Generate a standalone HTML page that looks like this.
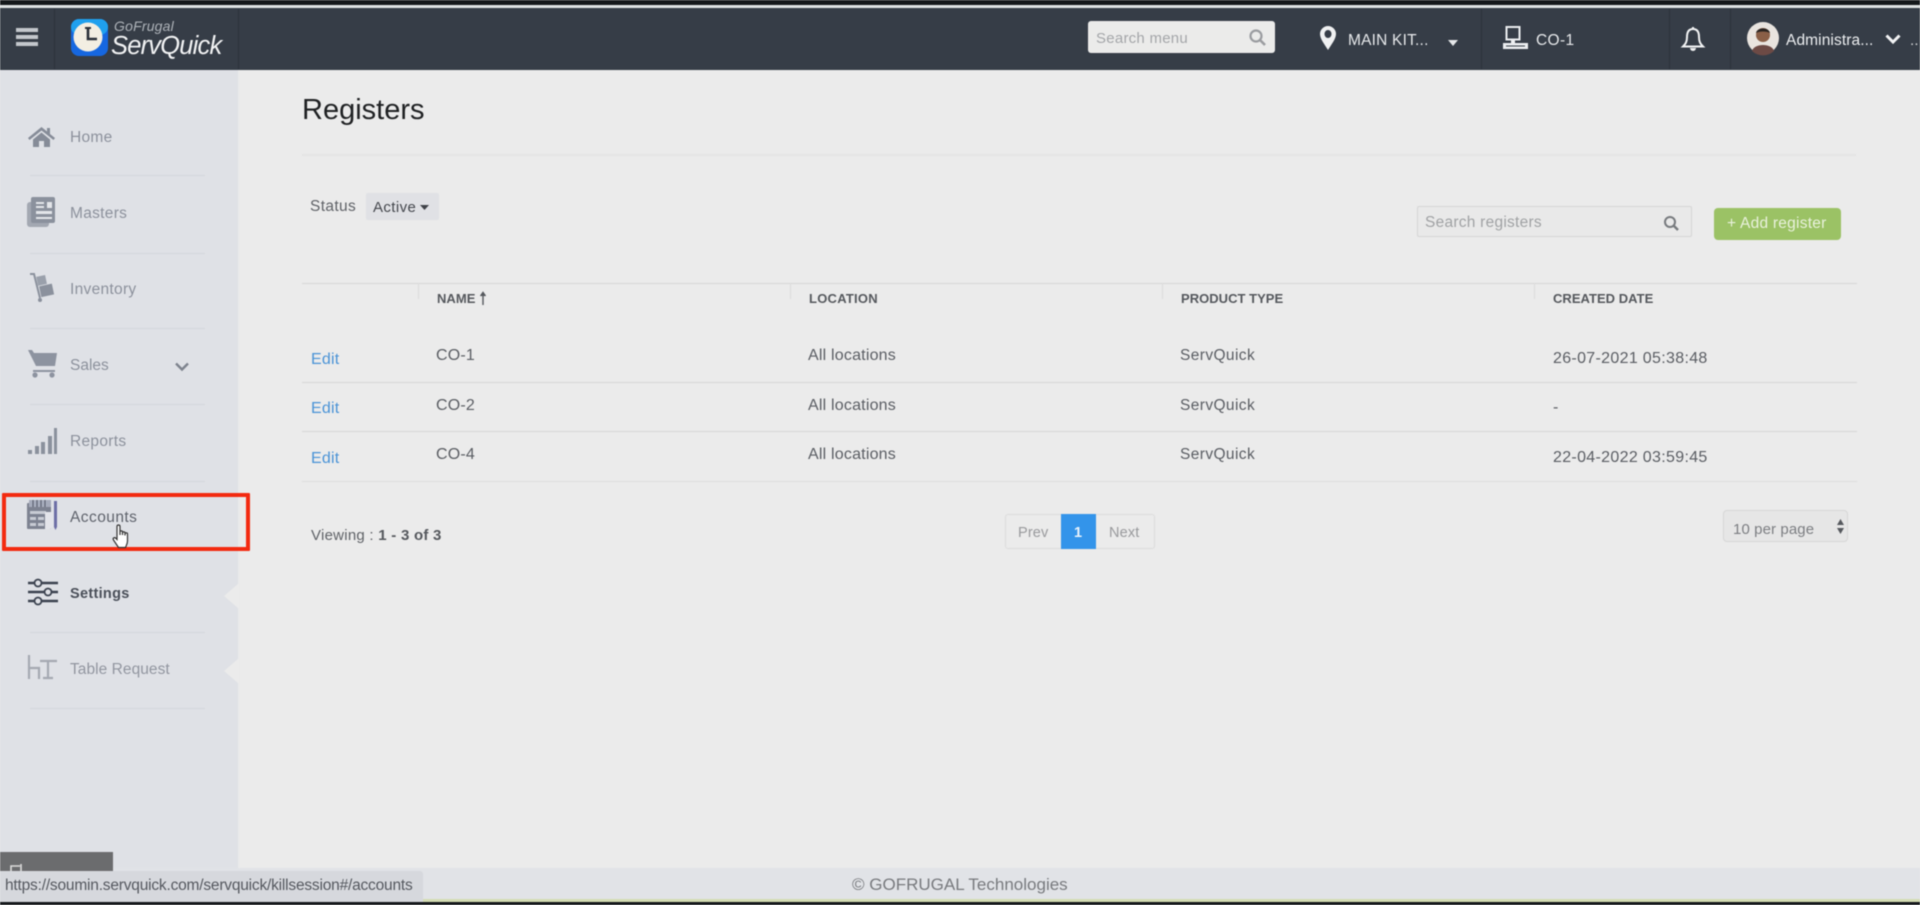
<!DOCTYPE html>
<html><head><meta charset="utf-8"><title>Registers</title>
<style>
*{box-sizing:border-box}
html,body{margin:0;padding:0;width:1920px;height:905px;overflow:hidden;background:#ebebeb;font-family:"Liberation Sans",sans-serif}
#r{position:absolute;left:0;top:0;width:1920px;height:905px;filter:blur(.5px);overflow:hidden}
.a{position:absolute}
.t{position:absolute;line-height:20px;height:20px;white-space:nowrap;font-size:15.500px;color:#5a5d63;margin-top:1px;letter-spacing:.15px}
.s{color:#8c919c;font-size:15.500px;left:70px;letter-spacing:.3px}
.sep{position:absolute;height:1px;background:#d3d6db;left:30px;width:175px}
.l{position:absolute;height:1px;background:#d6d6d6;left:302px;width:1555px}
.v{position:absolute;width:1px;height:16px;background:#dcdcdc;top:283px}
.h{font-size:13px;font-weight:bold;color:#55585d;letter-spacing:.03px}
.e{color:#4a93d6;font-size:16px;left:311px;letter-spacing:.2px}
.d{font-size:16px;letter-spacing:.32px}
.c{position:absolute;width:1px;background:#2c323b;top:9px;height:60px}
svg{position:absolute;overflow:visible}
</style></head><body>
<div id="r">
<!-- top strip -->
<div class="a" style="left:0;top:0;width:1920px;height:5px;background:#15181b"></div>
<div class="a" style="left:0;top:5px;width:1920px;height:3px;background:#dfe2e3"></div>
<!-- header -->
<div class="a" style="left:0;top:8px;width:1920px;height:62px;background:#363d47"></div>
<div class="c" style="left:54px"></div><div class="c" style="left:238px"></div>
<div class="c" style="left:1481px"></div><div class="c" style="left:1669px"></div><div class="c" style="left:1730px"></div>
<div class="a" style="left:16px;top:28px;width:22px;height:4px;background:#c3c7cc"></div>
<div class="a" style="left:16px;top:35px;width:22px;height:4px;background:#c3c7cc"></div>
<div class="a" style="left:16px;top:42px;width:22px;height:4px;background:#c3c7cc"></div>
<!-- logo -->
<svg style="left:71px;top:19px" width="37" height="37" viewBox="0 0 37 37">
<rect width="37" height="37" rx="8" fill="#1667e0"/><rect x="0" y="0" width="37" height="16" rx="8" fill="#1fa0ee"/>
<circle cx="17" cy="18" r="14.500" fill="#f3eee2"/>
<path d="M17 10v10h9" stroke="#2a2f38" stroke-width="2.600" fill="none"/><path d="M14 9h6" stroke="#2a2f38" stroke-width="2"/>
</svg>
<div class="t" style="left:114px;top:15px;font-size:14px;font-style:italic;color:#aeb3b9;letter-spacing:.2px">GoFrugal</div>
<div class="t" style="left:111px;top:33px;font-size:25.500px;line-height:24px;height:26px;font-style:italic;color:#f2f3f4;letter-spacing:-.8px">ServQuick</div>
<!-- header search -->
<div class="a" style="left:1088px;top:21px;width:187px;height:32px;background:#ebebea;border-radius:3px"></div>
<div class="t" style="left:1096px;top:28px;font-size:15px;color:#a4a6a9;letter-spacing:.25px">Search menu</div>
<svg style="left:1248px;top:28px" width="20" height="20" viewBox="0 0 20 20"><circle cx="8" cy="8" r="5.500" fill="none" stroke="#9a9ca0" stroke-width="2.200"/><path d="M12 12l5 5" stroke="#9a9ca0" stroke-width="2.600"/></svg>
<svg style="left:1319px;top:25px" width="18" height="26" viewBox="0 0 18 26"><path fill-rule="evenodd" d="M9 1a8 8 0 0 1 8 8c0 5-5 11-8 16C6 20 1 14 1 9a8 8 0 0 1 8-8zm0 4a3.500 4 0 1 0 0 8 3.500 4 0 0 0 0-8z" fill="#f0f1f2"/></svg>
<div class="t" style="left:1348px;top:30px;font-size:15.500px;color:#e6e8ea;letter-spacing:.2px">MAIN KIT...</div>
<svg style="left:1448px;top:40px" width="12" height="6"><path d="M0 0h10L5 6z" fill="#e6e8ea"/></svg>
<svg style="left:1503px;top:25px" width="26" height="26" viewBox="0 0 26 26"><rect x="3.500" y="2" width="13" height="12.500" fill="none" stroke="#eceef0" stroke-width="2"/><path d="M8 15h4v3H8z" fill="#eceef0"/><path d="M0 18h25v6H0z" fill="#eceef0"/><path d="M3 21h19" stroke="#363d47"/></svg>
<div class="t" style="left:1536px;top:30px;font-size:15.500px;color:#e6e8ea;letter-spacing:.35px">CO-1</div>
<svg style="left:1681px;top:26px" width="24" height="28" viewBox="0 0 24 28"><path d="M12 3c-5 0-6 4-6 8 0 5-1.500 7-4 9.500h20C19.500 18 18 16 18 11c0-4-1-8-6-8z" fill="none" stroke="#f2f3f4" stroke-width="2"/><path d="M9 22a3 3 0 0 0 6 0z" fill="#f2f3f4"/><path d="M12 1v2" stroke="#f2f3f4" stroke-width="2"/></svg>
<svg style="left:1747px;top:22px" width="32" height="32" viewBox="0 0 32 32"><circle cx="16" cy="16" r="16" fill="#e9e4df"/><circle cx="16" cy="13" r="7" fill="#8a5f47"/><path d="M9 11c1-6 13-6 14 0-3-2-11-2-14 0z" fill="#2a2421"/><path d="M5 29c2-8 20-8 22 0a16 16 0 0 1-22 0z" fill="#6d4a45"/></svg>
<div class="t" style="left:1786px;top:30px;font-size:15.500px;color:#eceef0;letter-spacing:.1px">Administra...</div>
<svg style="left:1885px;top:34px" width="16" height="11"><path d="M1.500 1.500L8 8l6.500-6.500" fill="none" stroke="#f2f3f4" stroke-width="3"/></svg>
<div class="t" style="left:1910px;top:30px;font-size:15px;color:#d6d8da">..</div>

<!-- sidebar -->
<div class="a" style="left:0;top:70px;width:239px;height:798px;background:#dfe1e6"></div>
<div class="a" style="left:238px;top:70px;width:1px;height:798px;background:#e8e9ea"></div>
<svg style="left:28px;top:126px" width="27" height="21" viewBox="0 0 27 21"><path d="M13.500 1L0 12l1.500 2L13.500 4.500 25.500 14l1.500-2-5-4V2h-3v3.500z" fill="#868c98"/><path d="M5 13.500l8.500-7 8.500 7V21h-6v-6h-5v6H5z" fill="#868c98"/></svg>
<div class="t s" style="top:127px">Home</div><div class="sep" style="top:175px"></div>
<svg style="left:27px;top:197px" width="28" height="30" viewBox="0 0 28 30"><rect x="0" y="5" width="22" height="25" rx="3" fill="#a3a8b2"/><rect x="4" y="0" width="24" height="26" rx="2" fill="#8b919d"/><path d="M9 5h8v2H9zM9 9h8v2H9zM20 5h5v6h-5zM9 14h16v3H9zM9 20h16v2H9z" fill="#e3e5e9"/></svg>
<div class="t s" style="top:203px">Masters</div><div class="sep" style="top:253px"></div>
<svg style="left:28px;top:272px" width="28" height="30" viewBox="0 0 28 30"><path d="M2 2h4l6 24" fill="none" stroke="#8b919d" stroke-width="2"/><rect x="9" y="4" width="9" height="9" fill="#9aa0ab" transform="rotate(-12 13 8)"/><rect x="12" y="13" width="13" height="11" fill="#8b919d" transform="rotate(-12 18 18)"/><circle cx="12" cy="28" r="2" fill="#8b919d"/></svg>
<div class="t s" style="top:279px">Inventory</div><div class="sep" style="top:328px"></div>
<svg style="left:28px;top:349px" width="29" height="29" viewBox="0 0 29 29"><path d="M0 1h4l2 3h23l-2 13H8z" fill="#8d93a0"/><path d="M5 21h22v2H5z" fill="#8d93a0"/><circle cx="7" cy="26" r="2.600" fill="#8d93a0"/><circle cx="24" cy="26" r="2.600" fill="#8d93a0"/></svg>
<div class="t s" style="top:355px;letter-spacing:0">Sales</div>
<svg style="left:175px;top:362px" width="14" height="10"><path d="M1 1.500l6 6 6-6" fill="none" stroke="#7e838e" stroke-width="2.400"/></svg>
<div class="sep" style="top:404px"></div>
<svg style="left:28px;top:428px" width="30" height="26" viewBox="0 0 30 26"><path d="M0 22h4v4H0zM7 18h4v8H7zM13 14h4v12h-4zM20 8h4v18h-4zM26 0h3v26h-3z" fill="#8b919d"/></svg>
<div class="t s" style="top:431px">Reports</div><div class="sep" style="top:481px"></div>
<svg style="left:27px;top:500px" width="31" height="30" viewBox="0 0 31 30"><rect x="0" y="3" width="24" height="26" rx="1" fill="#7d8291"/><path d="M2 0h22v7H2z" fill="#a6abbb"/><path d="M6 0v7M10 0v7M14 0v7M18 0v7" stroke="#555b6a"/><path d="M3 11h16v3H3zM3 17h6v3H3zM11 17h6v3h-6zM3 23h6v3H3zM11 23h6v3h-6z" fill="#c8cbd4"/><path d="M18 12h8v15l-3 2h-5z" fill="#e3e4ea"/><path d="M27 1h3v26l-1.500 3-1.500-3z" fill="#6d6fa6"/></svg>
<div class="t s" style="top:507px;color:#5f636c;letter-spacing:.45px">Accounts</div>
<!-- red highlight -->
<div class="a" style="left:2px;top:493px;width:248px;height:58px;border:4.500px solid #f32a10;border-radius:1px"></div>
<svg style="left:112px;top:524px" width="20" height="25" viewBox="0 0 20 25"><path d="M5 2.500c0-2 3-2 3 0V11l0-3c0-1.500 2.500-1.500 2.500 0v3-2c0-1.500 2.500-1.500 2.500 0v2.500-1.500c0-1.500 2.500-1.500 2.500 0V17c0 3-1.500 5-2 6.500H6.500L1.500 16c-1.200-2 1-3 2.300-1.800L5 15.500z" fill="#fff" stroke="#333" stroke-width="1.200"/></svg>
<svg style="left:28px;top:578px" width="30" height="26" viewBox="0 0 30 26"><path d="M0 5h30M0 14h30M0 23h30" stroke="#3c4350" stroke-width="2.400"/><circle cx="10" cy="5" r="3.500" fill="#dfe1e6" stroke="#3c4350" stroke-width="1.800"/><circle cx="20" cy="14" r="3.500" fill="#dfe1e6" stroke="#3c4350" stroke-width="1.800"/><circle cx="10" cy="23" r="3.500" fill="#dfe1e6" stroke="#3c4350" stroke-width="1.800"/></svg>
<div class="t s" style="top:583px;color:#4a4f59;font-weight:bold;font-size:14.500px">Settings</div><div class="sep" style="top:632px"></div>
<svg style="left:224px;top:583px" width="15" height="26"><path d="M15 0L0 13l15 13z" fill="#ebebeb"/></svg>
<svg style="left:27px;top:654px" width="31" height="26" viewBox="0 0 31 26"><path d="M2 1v24M2 14h10v11M13 7h17M21 7v17M16 24h10" fill="none" stroke="#a5a9b2" stroke-width="2.200"/></svg>
<div class="t s" style="top:659px;color:#9296a0;letter-spacing:.05px">Table Request</div><div class="sep" style="top:708px"></div>
<svg style="left:224px;top:658px" width="15" height="26"><path d="M15 0L0 13l15 13z" fill="#ebebeb"/></svg>

<!-- page heading -->
<div class="t" style="left:302px;top:92px;height:34px;line-height:34px;font-size:29px;color:#1f2123;letter-spacing:0">Registers</div>
<div class="a" style="left:302px;top:154px;width:1554px;height:2px;background:#e4e4e4"></div>
<div class="t" style="left:310px;top:196px;color:#5f6267;letter-spacing:.35px">Status</div>
<div class="a" style="left:366px;top:193px;width:73px;height:27px;background:#e0e1e5;border-radius:2px"></div>
<div class="t" style="left:373px;top:197px;color:#44474d;font-size:15px;letter-spacing:.4px">Active</div>
<svg style="left:420px;top:205px" width="10" height="5"><path d="M0 0h9L4.500 5z" fill="#3f4248"/></svg>
<!-- search registers -->
<div class="a" style="left:1417px;top:206px;width:275px;height:31px;border:1px solid #d6d6d6;border-radius:2px;background:#e9e9e9"></div>
<div class="t" style="left:1425px;top:212px;color:#a0a2a4;font-size:15.500px;letter-spacing:.25px">Search registers</div>
<svg style="left:1663px;top:215px" width="17" height="17" viewBox="0 0 17 17"><circle cx="7" cy="7" r="5" fill="none" stroke="#777a7e" stroke-width="2"/><path d="M10.500 10.500L15 15" stroke="#777a7e" stroke-width="2.400"/></svg>
<div class="a" style="left:1714px;top:208px;width:127px;height:32px;background:#9bc265;border-radius:4px"></div>
<div class="t" style="left:1727px;top:213px;color:#e9f1dc;font-size:15.500px;letter-spacing:.25px">+ Add register</div>
<!-- table -->
<div class="l" style="top:283px"></div>
<div class="v" style="left:418px"></div><div class="v" style="left:790px"></div><div class="v" style="left:1162px"></div><div class="v" style="left:1534px"></div>
<div class="t h" style="left:437px;top:288px">NAME</div>
<svg style="left:479px;top:292px" width="8" height="14"><path d="M4 13V2M1.500 4L4 .5 6.500 4" fill="#55585d" stroke="#55585d" stroke-width="1.400"/></svg>
<div class="t h" style="left:809px;top:288px;letter-spacing:.25px">LOCATION</div>
<div class="t h" style="left:1181px;top:288px">PRODUCT TYPE</div>
<div class="t h" style="left:1553px;top:288px">CREATED DATE</div>

<div class="t e" style="top:349px">Edit</div><div class="t e" style="top:398px">Edit</div><div class="t e" style="top:448px">Edit</div>
<div class="t d" style="left:436px;top:345px;letter-spacing:.2px">CO-1</div><div class="t d" style="left:436px;top:395px;letter-spacing:.2px">CO-2</div><div class="t d" style="left:436px;top:444px;letter-spacing:.2px">CO-4</div>
<div class="t" style="left:808px;top:345px;font-size:16px;letter-spacing:.2px">All locations</div><div class="t" style="left:808px;top:395px;font-size:16px;letter-spacing:.2px">All locations</div><div class="t" style="left:808px;top:444px;font-size:16px;letter-spacing:.2px">All locations</div>
<div class="t" style="left:1180px;top:345px;font-size:15.500px;letter-spacing:.4px">ServQuick</div><div class="t" style="left:1180px;top:395px;font-size:15.500px;letter-spacing:.4px">ServQuick</div><div class="t" style="left:1180px;top:444px;font-size:15.500px;letter-spacing:.4px">ServQuick</div>
<div class="t d" style="left:1553px;top:348px">26-07-2021 05:38:48</div><div class="t d" style="left:1553px;top:397px">-</div><div class="t d" style="left:1553px;top:447px">22-04-2022 03:59:45</div>
<div class="l" style="top:382px"></div><div class="l" style="top:431px"></div><div class="l" style="top:481px;background:#dedede"></div>
<!-- pager -->
<div class="t" style="left:311px;top:525px;color:#5f6267;letter-spacing:.25px;font-size:15px">Viewing : <b style="color:#55585d">1 - 3 of 3</b></div>
<div class="a" style="left:1005px;top:514px;width:150px;height:35px;border:1px solid #dcdcdc;border-radius:3px"></div>
<div class="a" style="left:1061px;top:514px;width:35px;height:35px;background:#3394ea"></div>
<div class="t" style="left:1018px;top:522px;color:#98999c;font-size:14.500px">Prev</div>
<div class="t" style="left:1074px;top:522px;color:#e8f2fb;font-size:14.500px;font-weight:bold">1</div>
<div class="t" style="left:1109px;top:522px;color:#98999c;font-size:14.500px">Next</div>
<div class="a" style="left:1723px;top:510px;width:125px;height:32px;border:1px solid #d6d6d6;border-radius:4px;background:#e6e6e6"></div>
<div class="t" style="left:1733px;top:519px;color:#7c7e82;font-size:15px;letter-spacing:.1px">10 per page</div>
<svg style="left:1836px;top:519px" width="9" height="15"><path d="M4.500 0L8 6H1zM4.500 15L1 9h7z" fill="#55585d"/></svg>
<!-- footer -->
<div class="a" style="left:0;top:868px;width:1920px;height:34px;background:#e1e3e7"></div>
<div class="t" style="left:852px;top:874px;font-size:17px;color:#787a7e;letter-spacing:0">© GOFRUGAL Technologies</div>
<div class="a" style="left:0;top:852px;width:113px;height:20px;background:#6b6c6e"></div>
<svg style="left:10px;top:864px" width="16" height="8"><path d="M1 8V2h9M11 0v8" fill="none" stroke="#dcdcdc" stroke-width="1.600"/></svg>
<div class="a" style="left:0;top:871px;width:423px;height:31px;background:#d6d8dd;border-top-right-radius:3px"></div>
<div class="t" style="left:5px;top:875px;font-size:15.500px;color:#55585f;letter-spacing:-.2px">https://soumin.servquick.com/servquick/killsession#/accounts</div>
<div class="a" style="left:423px;top:899px;width:1497px;height:3px;background:#d4dcb4"></div>
<div class="a" style="left:0;top:902px;width:1920px;height:3px;background:#15181b"></div>
</div>
</body></html>
